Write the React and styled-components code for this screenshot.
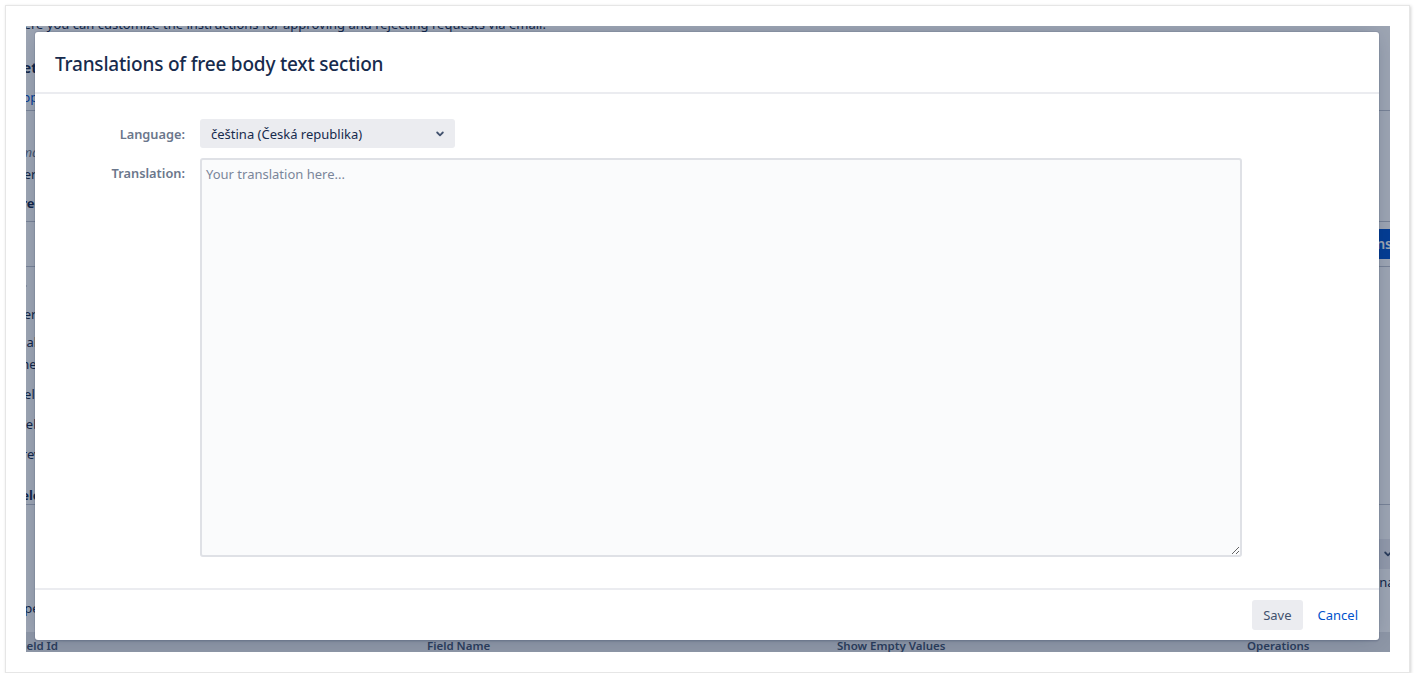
import React from "react";
import styled, { createGlobalStyle } from "styled-components";

const Global = createGlobalStyle`
  html, body { margin: 0; padding: 0; background: #ffffff; }
  body { font-family: "Noto Sans", "Open Sans", Arial, sans-serif; }
  * { box-sizing: border-box; }
`;

const Frame = styled.div`
  margin: 5px 0 0 5px;
  width: 1405px;
  height: 668px;
  padding: 20px;
  background: #ffffff;
  border: 1px solid #e6e6e6;
  box-shadow: 1px 1px 3px rgba(0, 0, 0, 0.18);
`;

const Viewport = styled.div`
  position: relative;
  width: 1364px;
  height: 626px;
  overflow: hidden;
  background: #ffffff;
`;

const Page = styled.div`
  width: 1400px;
  margin: -12px 0 0 -12px;
  font-family: "Noto Sans", Arial, sans-serif;
  font-size: 13px;
  color: #172b4d;
  display: flex;
  flex-direction: column;
`;

const Line = styled.div`
  margin-top: ${(p) => p.$mt || 0}px;
  height: ${(p) => p.$h || 18}px;
  line-height: ${(p) => p.$h || 18}px;
  font-weight: ${(p) => (p.$bold ? 700 : 400)};
  font-style: ${(p) => (p.$italic ? "italic" : "normal")};
  font-size: ${(p) => p.$size || 13}px;
  color: ${(p) => p.$color || "#172b4d"};
  white-space: nowrap;
`;

const Rule = styled.div`
  margin-top: ${(p) => p.$mt || 0}px;
  height: 1px;
  background: #c1c7d0;
`;

const SplitRow = styled.div`
  margin-top: ${(p) => p.$mt || 0}px;
  display: flex;
  align-items: center;
  justify-content: space-between;
  height: ${(p) => p.$h || 30}px;
`;

const BlueButton = styled.div`
  height: 30px;
  line-height: 30px;
  padding: 0 12px;
  background: #0052cc;
  color: #ffffff;
  font-weight: 600;
  font-size: 14px;
  border-radius: 3px;
  margin-right: 10px;
`;

const GreyBox = styled.div`
  width: 40px;
  height: 30px;
  background: #ebecf0;
  border-radius: 3px;
  display: flex;
  align-items: center;
  justify-content: center;
  margin-right: 6px;
`;

const TableHead = styled.div`
  margin-top: ${(p) => p.$mt || 0}px;
  display: grid;
  grid-template-columns: 410px 410px 410px 1fr;
  height: 26px;
  align-items: center;
  background: #e4e6ea;
  font-weight: 600;
  font-size: 11.5px;
  color: #42526e;
  padding-left: 3px;
`;

const Blanket = styled.div`
  position: absolute;
  inset: 0;
  background: rgba(9, 30, 66, 0.4);
`;

const Modal = styled.div`
  position: absolute;
  left: 9px;
  top: 6px;
  width: 1344px;
  height: 608px;
  background: #ffffff;
  border-radius: 3px;
  box-shadow: 0 0 0 1px rgba(9, 30, 66, 0.08), 0 2px 1px rgba(9, 30, 66, 0.08),
    0 0 20px -6px rgba(9, 30, 66, 0.31);
  display: flex;
  flex-direction: column;
  font-family: "Noto Sans", Arial, sans-serif;
`;

const Header = styled.div`
  height: 62px;
  padding: 4px 20px 0;
  display: flex;
  align-items: center;
  border-bottom: 2px solid #ebecf0;
`;

const Title = styled.h2`
  margin: 0;
  font-size: 19px;
  font-weight: 500;
  color: #172b4d;
  letter-spacing: -0.2px;
`;

const Body = styled.div`
  flex: 1;
  padding: 25px 20px 31px 0;
  display: grid;
  grid-template-columns: 150px 1042px;
  column-gap: 15px;
  row-gap: 10px;
  align-content: start;
`;

const Label = styled.label`
  font-size: 12.8px;
  font-weight: 600;
  color: #6b778c;
  text-align: right;
  padding-top: ${(p) => p.$pt || 0}px;
  align-self: ${(p) => (p.$center ? "center" : "start")};
`;

const SelectBox = styled.div`
  width: 255px;
  height: 29px;
  background: #ebecf0;
  border-radius: 3px;
  padding: 0 11px;
  display: flex;
  align-items: center;
  justify-content: space-between;
  font-size: 13px;
  color: #172b4d;
`;

const TextArea = styled.textarea`
  width: 1042px;
  height: 399px;
  background: #fafbfc;
  border: 2px solid #dfe1e6;
  border-radius: 3px;
  padding: 5px 4px;
  font-family: "Noto Sans", Arial, sans-serif;
  font-size: 13px;
  color: #172b4d;
  resize: vertical;
  outline: none;
  &::placeholder { color: #7a869a; }
`;

const Footer = styled.div`
  height: 52px;
  border-top: 2px solid #ebecf0;
  padding: 0 21px 0 0;
  display: flex;
  align-items: center;
  justify-content: flex-end;
`;

const Button = styled.button`
  height: 30px;
  border: none;
  border-radius: 3px;
  font-family: "Noto Sans", Arial, sans-serif;
  font-size: 13px;
  background: ${(p) => (p.$link ? "transparent" : "#ebecf0")};
  color: ${(p) => (p.$link ? "#0052cc" : "#42526e")};
  margin-left: ${(p) => (p.$link ? "15px" : "0")};
  padding: ${(p) => (p.$link ? "0" : "0 11px")};
  cursor: pointer;
`;

const Chevron = () => (
  <svg width="8" height="6" viewBox="0 0 8 6" aria-hidden="true">
    <path d="M1.2 1.5 L4 4.3 L6.8 1.5" fill="none" stroke="#42526e" strokeWidth="1.8" strokeLinecap="round" strokeLinejoin="round" />
  </svg>
);

const Gear = () => (
  <svg width="14" height="14" viewBox="0 0 24 24" aria-hidden="true">
    <path d="M12 8a4 4 0 1 0 0 8 4 4 0 0 0 0-8zm9 5.2v-2.4l-2.6-.5a7 7 0 0 0-.8-1.9l1.5-2.2-1.7-1.7-2.2 1.5a7 7 0 0 0-1.9-.8L12.8 3h-2.4l-.5 2.6a7 7 0 0 0-1.9.8L5.8 4.9 4.1 6.6l1.5 2.2a7 7 0 0 0-.8 1.9L2 11.2v2.4l2.6.5a7 7 0 0 0 .8 1.9l-1.5 2.2 1.7 1.7 2.2-1.5a7 7 0 0 0 1.9.8l.5 2.6h2.4l.5-2.6a7 7 0 0 0 1.9-.8l2.2 1.5 1.7-1.7-1.5-2.2a7 7 0 0 0 .8-1.9z" fill="#172b4d" />
  </svg>
);

export default function App() {
  return (
    <>
      <Global />
      <Frame>
        <Viewport>
          <Page>
            <Line $mt={0} $h={20}>Here you can customize the instructions for approving and rejecting requests via email.</Line>
            <Line $mt={22} $h={22} $bold $size={15}>Settings</Line>
            <Line $mt={10} $h={18} $color="#0052cc">Approval instructions</Line>
            <Rule $mt={4} />
            <Line $mt={32} $italic $color="#6b778c">Email body</Line>
            <Line $mt={4}>Here you can define text</Line>
            <SplitRow $mt={2} $h={36}>
              <Line $bold>Free body text section</Line>
            </SplitRow>
            <Rule $mt={0} />
            <SplitRow $mt={0} $h={44}>
              <span />
              <BlueButton>Translations</BlueButton>
            </SplitRow>
            <Rule $mt={0} />
            <SplitRow $mt={8} $h={22}>
              <Gear />
            </SplitRow>
            <Line $mt={8}>Here you can add fields</Line>
            <Line $mt={10}>It also supports</Line>
            <Line $mt={4}>The fields</Line>
            <Line $mt={12}>Field configuration</Line>
            <Line $mt={12}>Webhook settings</Line>
            <Line $mt={12}>Preview</Line>
            <Line $mt={23} $bold>Selected fields</Line>
            <Rule $mt={0} />
            <SplitRow $mt={34} $h={30}>
              <span />
              <GreyBox><Chevron /></GreyBox>
            </SplitRow>
            <SplitRow $mt={4} $h={18}>
              <span />
              <Line>Sort by field name</Line>
            </SplitRow>
            <Line $mt={8}>Ope the fields below</Line>
            <TableHead $mt={15}>
              <span>Field Id</span>
              <span>Field Name</span>
              <span>Show Empty Values</span>
              <span>Operations</span>
            </TableHead>
          </Page>
          <Blanket />
          <Modal role="dialog">
            <Header>
              <Title>Translations of free body text section</Title>
            </Header>
            <Body>
              <Label $center>Language:</Label>
              <SelectBox>
                <span>čeština (Česká republika)</span>
                <Chevron />
              </SelectBox>
              <Label $pt={6}>Translation:</Label>
              <TextArea placeholder="Your translation here..." />
            </Body>
            <Footer>
              <Button>Save</Button>
              <Button $link>Cancel</Button>
            </Footer>
          </Modal>
        </Viewport>
      </Frame>
    </>
  );
}
